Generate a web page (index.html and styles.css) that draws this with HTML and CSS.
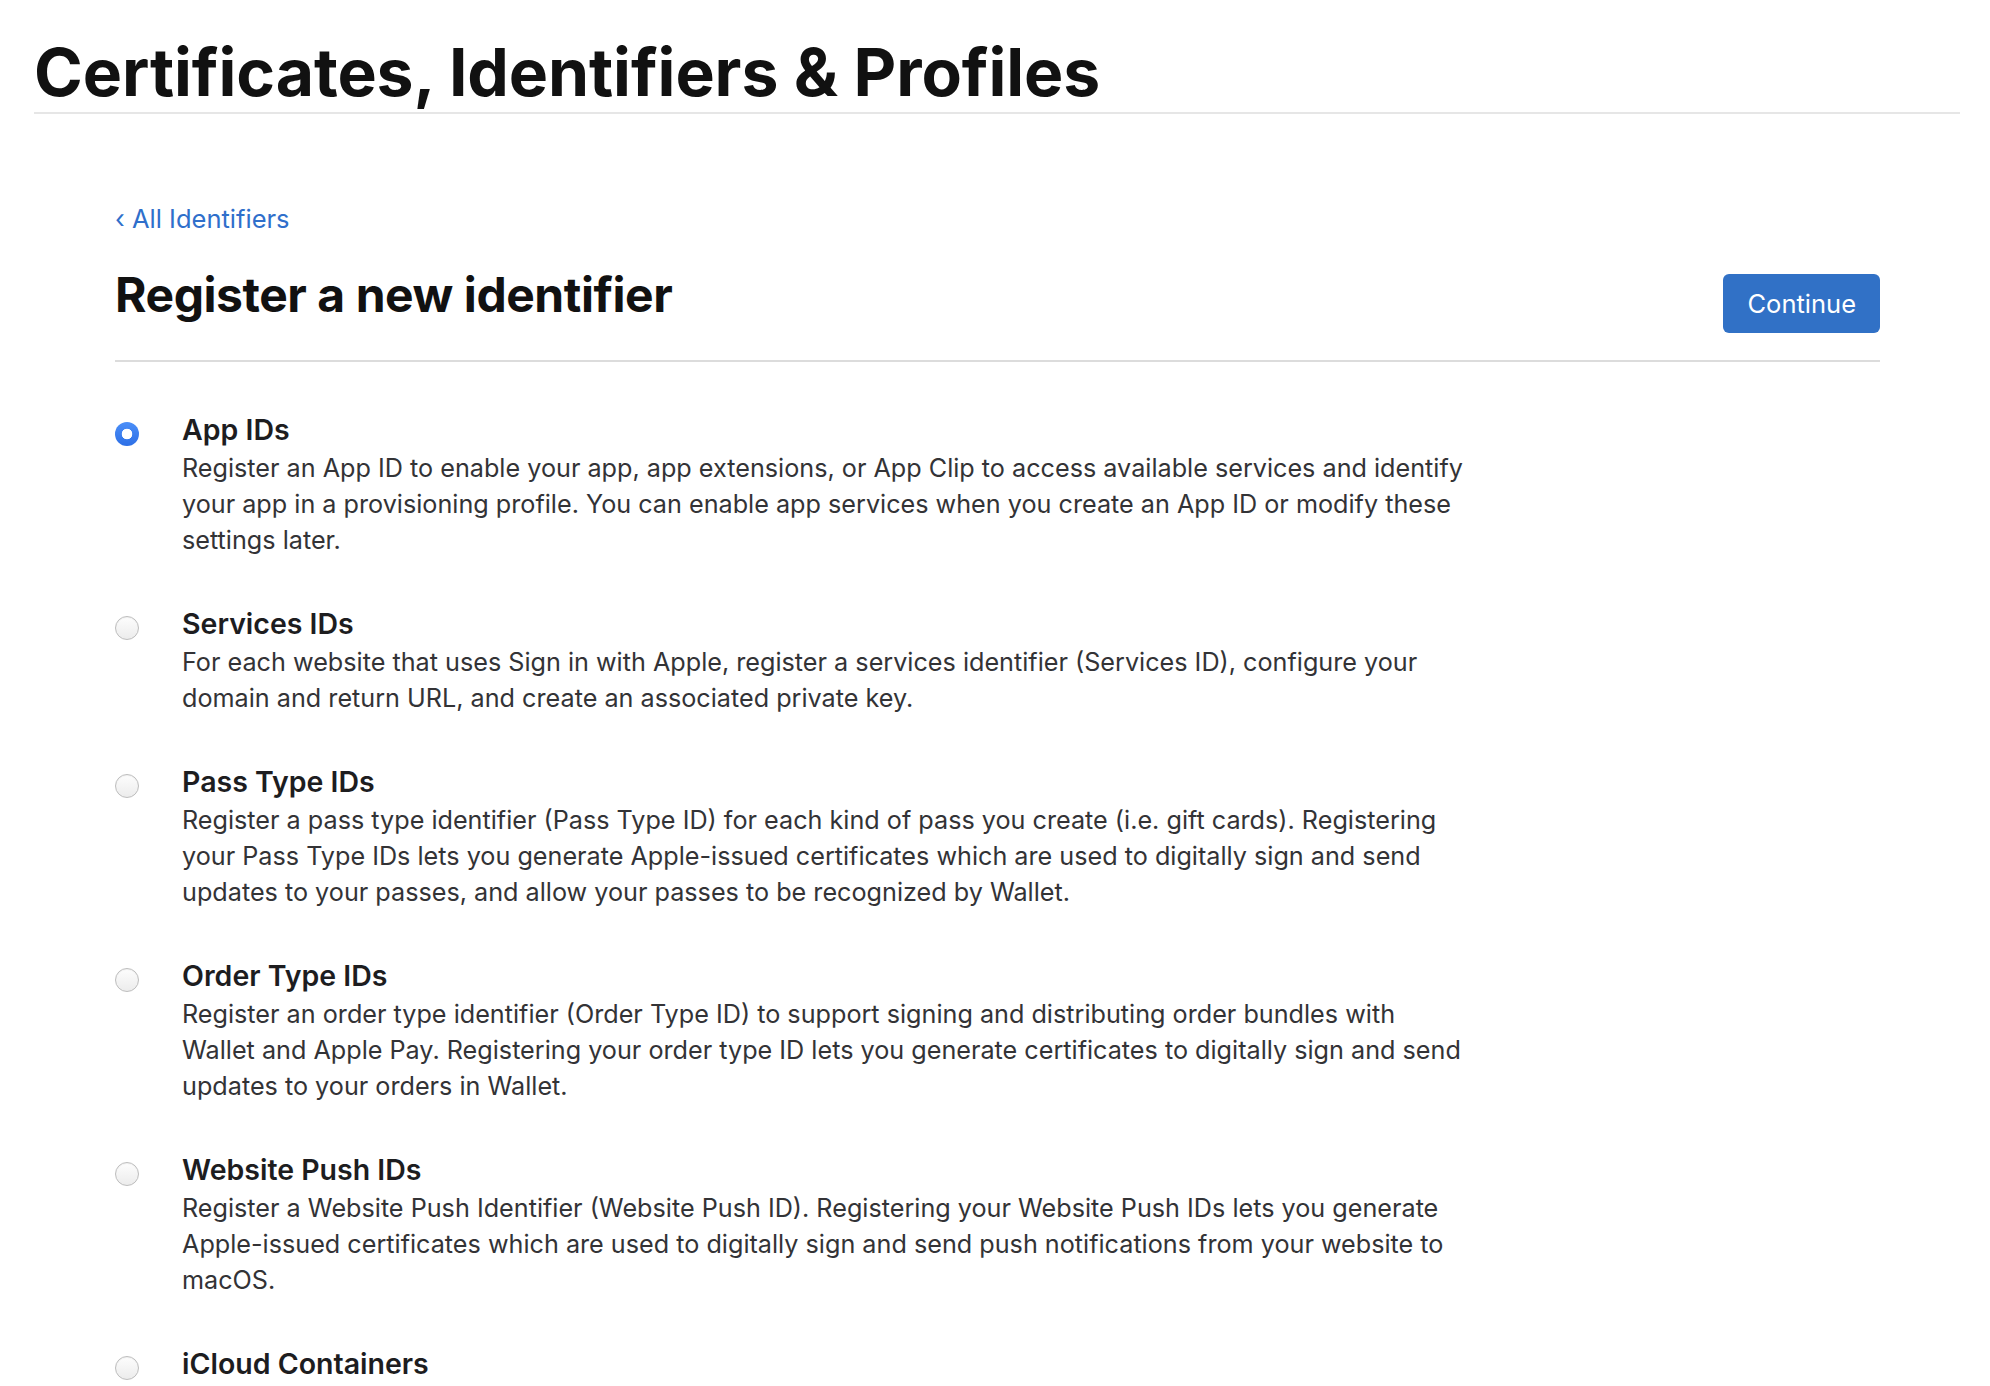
FILE: index.html
```html
<!DOCTYPE html>
<html lang="en">
<head>
<meta charset="utf-8">
<title>Certificates, Identifiers &amp; Profiles</title>
<link rel="stylesheet" href="styles.css">
</head>
<body>
<header class="site-header">
  <h1 class="site-title">Certificates, Identifiers &amp; Profiles</h1>
</header>
<main class="main">
  <a class="back-link" href="#"><span class="chev">&#8249;</span> All Identifiers</a>
  <div class="title-row">
    <h2 class="page-title">Register a new identifier</h2>
    <button class="btn-continue" type="button">Continue</button>
  </div>
  <ul class="id-list">
    <li class="id-item">
      <span class="radio radio-on"></span>
      <div class="id-body">
        <div class="id-name">App IDs</div>
        <p class="id-desc">Register an App ID to enable your app, app extensions, or App Clip to access available services and identify<br>your app in a provisioning profile. You can enable app services when you create an App ID or modify these<br>settings later.</p>
      </div>
    </li>
    <li class="id-item">
      <span class="radio"></span>
      <div class="id-body">
        <div class="id-name">Services IDs</div>
        <p class="id-desc">For each website that uses Sign in with Apple, register a services identifier (Services ID), configure your<br>domain and return URL, and create an associated private key.</p>
      </div>
    </li>
    <li class="id-item">
      <span class="radio"></span>
      <div class="id-body">
        <div class="id-name">Pass Type IDs</div>
        <p class="id-desc">Register a pass type identifier (Pass Type ID) for each kind of pass you create (i.e. gift cards). Registering<br>your Pass Type IDs lets you generate Apple-issued certificates which are used to digitally sign and send<br>updates to your passes, and allow your passes to be recognized by Wallet.</p>
      </div>
    </li>
    <li class="id-item">
      <span class="radio"></span>
      <div class="id-body">
        <div class="id-name">Order Type IDs</div>
        <p class="id-desc">Register an order type identifier (Order Type ID) to support signing and distributing order bundles with<br>Wallet and Apple Pay. Registering your order type ID lets you generate certificates to digitally sign and send<br>updates to your orders in Wallet.</p>
      </div>
    </li>
    <li class="id-item">
      <span class="radio"></span>
      <div class="id-body">
        <div class="id-name">Website Push IDs</div>
        <p class="id-desc">Register a Website Push Identifier (Website Push ID). Registering your Website Push IDs lets you generate<br>Apple-issued certificates which are used to digitally sign and send push notifications from your website to<br>macOS.</p>
      </div>
    </li>
    <li class="id-item">
      <span class="radio"></span>
      <div class="id-body">
        <div class="id-name">iCloud Containers</div>
      </div>
    </li>
  </ul>
</main>
</body>
</html>
```
FILE: styles.css
```css
* { box-sizing: border-box; }
html, body { margin: 0; padding: 0; background: #fff; }
body {
  font-family: Inter, "Noto Sans", "Liberation Sans", sans-serif;
  color: #1d1d1f;
}
.site-header {
  margin: 0 30px 0 34px;
  padding-top: 34px;
  padding-bottom: 2px;
  border-bottom: 2px solid #e6e6e6;
}
.site-title {
  margin: 0;
  font-size: 66px;
  line-height: 76px;
  font-weight: 700;
  letter-spacing: -0.1px;
  color: #111;
}
.main {
  padding: 90px 110px 0 115px;
}
.back-link {
  display: inline-block;
  font-size: 25.5px;
  line-height: 30px;
  color: #2f6fcb;
  text-decoration: none;
}
.title-row {
  display: flex;
  justify-content: space-between;
  align-items: flex-start;
  margin-top: 33px;
  padding-bottom: 27px;
  border-bottom: 2px solid #dcdcdc;
}
.page-title {
  margin: 0;
  font-size: 48px;
  line-height: 56px;
  font-weight: 700;
  letter-spacing: -0.45px;
  color: #111;
}
.btn-continue {
  margin-top: 7px;
  height: 59px;
  padding: 0 24px;
  border: 0;
  border-radius: 6px;
  background: #3171c6;
  color: #fff;
  font-family: inherit;
  font-size: 25.5px;
}
.id-list {
  list-style: none;
  margin: 0;
  padding: 48px 0 0 0;
  display: flex;
  flex-direction: column;
  gap: 46px;
}
.id-item {
  display: flex;
  align-items: flex-start;
}
.radio {
  flex: none;
  width: 24px;
  height: 24px;
  margin-top: 12px;
  margin-right: 43px;
  border-radius: 50%;
  border: 1px solid #bdbdbd;
  background: linear-gradient(#fdfdfd, #ececec);
  box-shadow: inset 0 1px 1px rgba(0,0,0,0.05);
}
.radio-on {
  border: 0;
  background: radial-gradient(circle, #fff 0 5px, transparent 5.6px), linear-gradient(#4b8ff8, #2d6fe6);
  box-shadow: none;
}
.id-body { width: 1420px; }
.id-name {
  font-size: 28.5px;
  line-height: 40px;
  font-weight: 600;
  color: #1d1d1f;
}
.id-desc {
  margin: 0;
  font-size: 25.2px;
  line-height: 36px;
  color: #333336;
}
```
